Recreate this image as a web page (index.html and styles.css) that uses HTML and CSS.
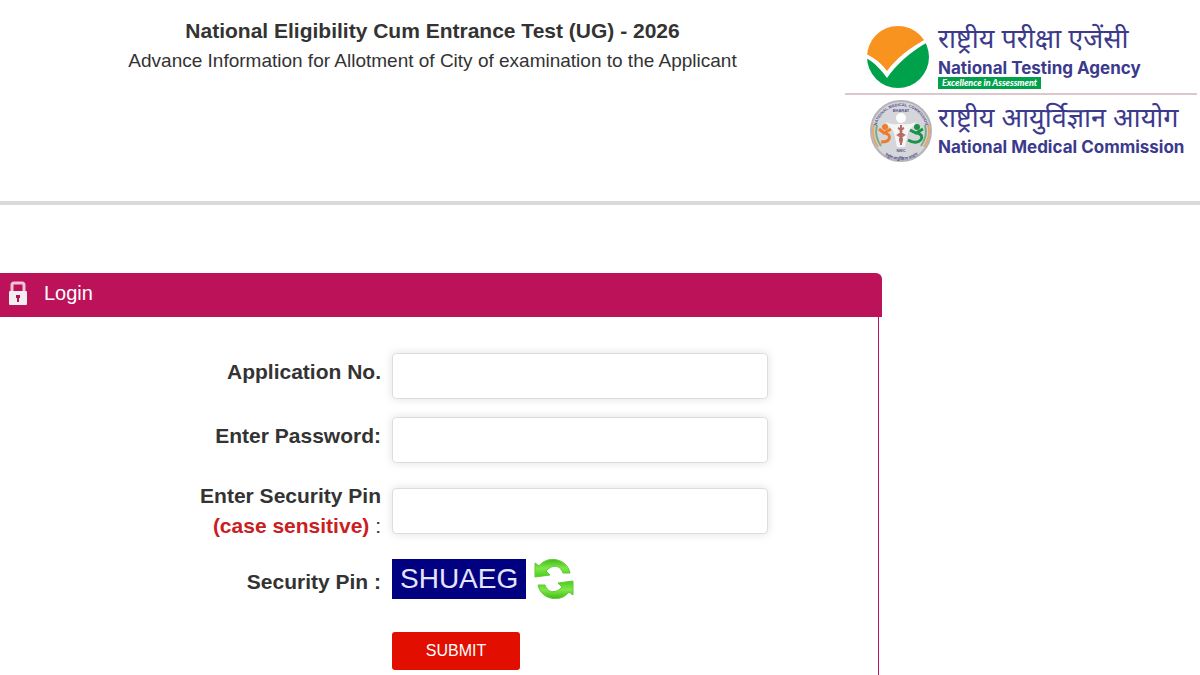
FILE: index.html
```
<!DOCTYPE html>
<html lang="en">
<head>
<meta charset="utf-8">
<meta name="viewport" content="width=device-width, initial-scale=1">
<title>National Eligibility Cum Entrance Test (UG) - 2026</title>
<link rel="stylesheet" href="styles.css">
</head>
<body>
<header class="masthead">
  <div class="heading">
    <h1 class="title">National Eligibility Cum Entrance Test (UG) - 2026</h1>
    <p class="subtitle">Advance Information for Allotment of City of examination to the Applicant</p>
  </div>
  <div class="logos">
    <div class="brand brand-nta">
      <svg class="emblem" viewBox="0 0 64 64" aria-hidden="true">
        <defs><clipPath id="disc"><circle cx="32" cy="32" r="31"/></clipPath></defs>
        <g clip-path="url(#disc)">
          <path d="M0 33C9 38 15 45 21 53C31 39 45 26 64 16V64H0Z" fill="#00a14b"/>
          <path d="M0 0H64V12C44 22 30 34 21 46C15 38 9 33 0 29Z" fill="#f7931e"/>
        </g>
      </svg>
      <div class="wordmark">
        <span class="name-hi" lang="hi">राष्ट्रीय परीक्षा एजेंसी</span>
        <span class="name-en">National Testing Agency</span>
        <span class="motto">Excellence in Assessment</span>
      </div>
    </div>
    <div class="brand brand-nmc">
      <svg class="emblem" viewBox="0 0 64 64" aria-hidden="true">
        <defs>
          <path id="arc-top" d="M7 32A25 25 0 0 1 57 32"/>
          <path id="arc-bottom" d="M4 36A28 25 0 0 0 60 36"/>
        </defs>
        <circle cx="32" cy="32" r="30" fill="#d5d6da" stroke="#b5b3b5" stroke-width="2"/>
        <path d="M5 25A28 28 0 0 0 9 48M59 25A28 28 0 0 1 55 48" fill="none" stroke="#e9a36b" stroke-width="2"/>
        <path d="M8 26A25 25 0 0 0 12 47M56 26A25 25 0 0 1 52 47" fill="none" stroke="#6fae86" stroke-width="2"/>
        <text class="seal-text"><textPath href="#arc-top" startOffset="50%" text-anchor="middle">NATIONAL MEDICAL COMMISSION</textPath></text>
        <text class="seal-text" x="32" y="13" text-anchor="middle">BHARAT</text>
        <text class="seal-text seal-hi" lang="hi"><textPath href="#arc-bottom" startOffset="50%" text-anchor="middle">राष्ट्रीय आयुर्विज्ञान आयोग</textPath></text>
        <circle cx="32" cy="19" r="5" fill="#fff"/>
        <path d="M17 23C22 26 27 25 32 25C37 25 42 26 47 23C45 28 40 30 39 34L36 48H28L25 34C24 30 19 28 17 23Z" fill="#f5f5f6"/>
        <text class="seal-text" x="32" y="53" text-anchor="middle">NMC</text>
        <path d="M32 26V46M29 29Q36 32 29 36Q36 40 31 44M35 29Q28 32 35 36Q28 40 33 44" fill="none" stroke="#b66b63" stroke-width="2"/>
        <circle cx="16" cy="28" r="3" fill="#ee7d2b"/>
        <path d="M10 30L15 34L22 30M14 34C23 34 23 43 12 43" fill="none" stroke="#ee7d2b" stroke-width="3"/>
        <circle cx="48" cy="28" r="3" fill="#179447"/>
        <path d="M41 31L47 34L54 30M48 34C58 36 51 48 39 41" fill="none" stroke="#179447" stroke-width="3"/>
      </svg>
      <div class="wordmark">
        <span class="name-hi" lang="hi">राष्ट्रीय आयुर्विज्ञान आयोग</span>
        <span class="name-en">National Medical Commission</span>
      </div>
    </div>
  </div>
</header>
<main class="panel">
  <h2 class="panel-title">
    <svg class="lock" viewBox="0 0 18 24" aria-hidden="true">
      <path d="M3 11V4Q3 2 5 2H13Q15 2 15 4V11" fill="none" stroke="#eec6d6" stroke-width="3"/>
      <rect y="10" width="18" height="14" rx="1" fill="#f3eef0"/>
      <path d="M7 14H11V17H10V21H8V17H7Z" fill="#bb1259"/>
    </svg>
    Login
  </h2>
  <form class="form" onsubmit="return false">
    <div class="row">
      <label class="label" for="app-no">Application No.</label>
      <input class="field" id="app-no" type="text">
    </div>
    <div class="row">
      <label class="label" for="password">Enter Password:</label>
      <input class="field" id="password" type="password">
    </div>
    <div class="row row-tall">
      <label class="label" for="pin">Enter Security Pin<br><span class="warn">(case sensitive)</span> <span class="colon">:</span></label>
      <input class="field" id="pin" type="text">
    </div>
    <div class="row row-pin">
      <span class="label">Security Pin :</span>
      <div class="pin">
        <span class="captcha">SHUAEG</span>
        <button class="refresh" type="button" aria-label="Refresh security pin">
          <svg viewBox="0 0 40 40" aria-hidden="true">
            <defs>
              <linearGradient id="leaf" x2="0" y2="1">
                <stop offset="0" stop-color="#3fba18"/>
                <stop offset="0.5" stop-color="#7fe848"/>
                <stop offset="1" stop-color="#48cc1c"/>
              </linearGradient>
            </defs>
            <path id="arrow" d="M36 14C33-1 13-4 5 7L1 4V18L16 16L12 12C17 6 26 5 29 14Z" fill="url(#leaf)" stroke="#5fcb35"/>
            <use href="#arrow" transform="rotate(180 20 20)"/>
          </svg>
        </button>
      </div>
    </div>
    <div class="row">
      <button class="submit" type="submit">SUBMIT</button>
    </div>
  </form>
</main>
</body>
</html>
```
FILE: styles.css
```
* { box-sizing: border-box; }
body {
  display: flex;
  flex-direction: column;
  min-height: 100vh;
  margin: 0;
  background: #fff;
  color: #333;
  font-family: "Liberation Sans", Arial, sans-serif;
}
.masthead {
  display: flex;
  align-items: flex-start;
  padding: 17px 0 38px;
  border-bottom: 4px solid #dadada;
}
.heading { flex: 1; text-align: center; padding-left: 20px; }
.title { margin: 0; font-size: 21px; line-height: 28px; }
.subtitle { margin: 4px 0 0; font-size: 19px; line-height: 24px; }
.logos { flex: none; width: 355px; }
.brand { display: flex; gap: 8px; }
.brand-nta {
  padding: 8px 0 4px 21px;
  margin-right: 3px;
  border-bottom: 2px solid #dcc8cc;
}
.brand-nmc { padding: 4px 0 0 24px; }
.emblem { flex: none; width: 64px; height: 64px; }
.brand-nmc .emblem { margin-right: -3px; }
.wordmark {
  display: flex;
  flex-direction: column;
  align-items: flex-start;
  color: #3b3a8d;
  white-space: nowrap;
}
.brand-nmc .wordmark { padding-top: 5px; }
.name-hi {
  font-family: "Noto Sans Devanagari", "Noto Sans", sans-serif;
  font-size: 27px;
  line-height: 34px;
}
.name-en {
  font-family: Inter, "Liberation Sans", sans-serif;
  font-size: 17px;
  font-weight: 700;
  line-height: 18px;
}
.motto {
  padding: 0 4px;
  background: #00a14b;
  color: #fff;
  font-family: Lato, sans-serif;
  font-size: 9px;
  font-style: italic;
  font-weight: 900;
  line-height: 12px;
}
.seal-text {
  fill: #55558f;
  font-family: "Liberation Sans", sans-serif;
  font-size: 4px;
  font-weight: 700;
}
.panel {
  display: flex;
  flex: 1;
  flex-direction: column;
  width: 73.5%;
  margin-top: 68px;
}
.panel-title {
  display: flex;
  align-items: center;
  gap: 17px;
  height: 44px;
  margin: 0;
  padding: 0 9px 4px;
  border-radius: 0 6px 0 0;
  background: #bb1259;
  color: #fff;
  font-size: 20px;
  font-weight: 400;
}
.lock { width: 18px; height: 24px; }
.form {
  display: flex;
  flex: 1;
  flex-direction: column;
  gap: 18px;
  margin-right: 3px;
  padding: 36px 0 4px;
  border-right: 1px solid #bb1259;
}
.row {
  display: grid;
  grid-template-columns: 381px 376px;
  column-gap: 11px;
  align-items: center;
}
.label {
  padding-bottom: 8px;
  font-size: 21px;
  font-weight: 700;
  line-height: 30px;
  text-align: right;
}
.row-tall .label { padding: 0; }
.warn { color: #c9201f; }
.colon { font-weight: 400; }
.field {
  width: 100%;
  height: 46px;
  padding: 0 12px;
  border: 1px solid #ddd;
  border-radius: 4px;
  background: #fff;
  box-shadow: 0 0 10px rgba(0, 0, 0, 0.12);
  font: inherit;
  font-size: 20px;
}
.row-pin .label { padding: 6px 0 0; }
.pin { display: flex; align-items: center; gap: 8px; }
.captcha {
  padding: 0 8px;
  background: #000080;
  color: #e4e4fa;
  font-size: 28px;
  line-height: 40px;
}
.refresh {
  width: 40px;
  height: 40px;
  padding: 0;
  border: 0;
  background: none;
}
.refresh svg { display: block; }
.submit {
  grid-column: 2;
  justify-self: start;
  width: 128px;
  height: 38px;
  margin-top: 15px;
  border: 0;
  border-radius: 3px;
  background: #e20f00;
  color: #fff;
  font: inherit;
  font-size: 16px;
}
```
